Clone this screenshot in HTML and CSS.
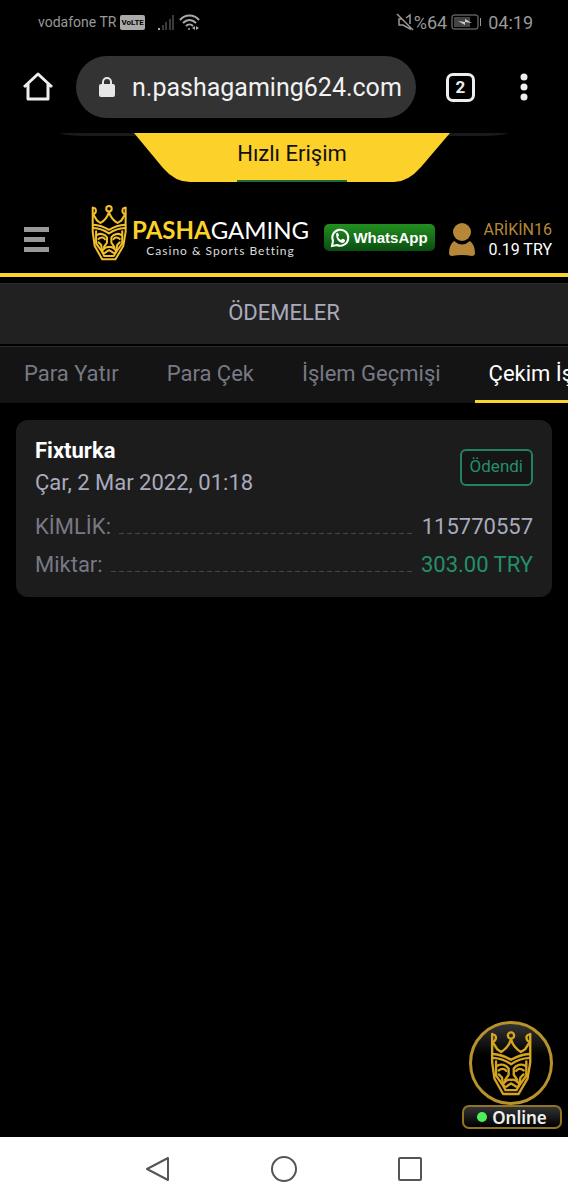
FILE: index.html
```html
<!DOCTYPE html>
<html lang="tr">
<head>
  <meta charset="UTF-8" />
  <meta name="viewport" content="width=device-width, initial-scale=1.0"/>
  <title>Ödemeler</title>
  <link rel="stylesheet" href="styles.css">
</head>
<body>

  <!-- king logo, used in the header and in the chat badge -->
  <svg class="defs" width="0" height="0" aria-hidden="true">
    <symbol id="king" viewBox="32 18 106 168">
      <g fill="none" stroke="currentColor" stroke-width="6" stroke-linejoin="round" stroke-linecap="round">
        <path d="M37 28V100L43 142L65 181H104L127 142L134 100V28"/>
        <path d="M38 30C46 28 50 38 43 46L38 48L50 67L60 74C70 68 80 58 85 42C90 58 100 68 110 74L121 67L133 48L128 46C121 38 125 28 133 30"/>
        <circle cx="85" cy="32" r="8"/>
        <path d="M38 79C55 80 72 86 85 94C98 86 116 80 133 79"/>
        <path d="M38 89C56 90 74 97 85 105C96 97 115 90 133 89"/>
        <path d="M47 98V134L64 158L71 171H99L107 158L124 134V98"/>
        <path d="M50 109C60 103 73 107 79 116V132L70 145M121 109C111 103 98 107 92 116V132L101 145"/>
        <path d="M54 121C61 115 69 116 73 122M117 121C110 115 102 116 98 122"/>
        <path d="M54 131L62 139L64 152M117 131L109 139L107 152"/>
        <path d="M85 145C78 143 72 147 67 153C62 160 70 165 76 160L85 154L95 160C101 165 109 160 104 153C99 147 92 143 85 145Z"/>
      </g>
    </symbol>
  </svg>

  <div class="status-bar">
    <span class="carrier">vodafone TR</span>
    <span class="volte">VoLTE</span>
    <svg class="signal" width="18" height="17" viewBox="0 0 18 17" fill="#3a3a3a">
      <path fill="#aaa" d="M1 14h2v2H1z"/>
      <path d="M5 11h2v5H5zM8 8h2v8H8zM12 5h2v11h-2zM15 1h2v15h-2z"/>
    </svg>
    <svg class="wifi" width="21" height="17" viewBox="0 0 21 17" fill="none" stroke="#aaa" stroke-width="2">
      <path d="M1 6C6 0 15 0 20 6M4 9C8 5 13 5 17 9M7 12C9 10 12 10 14 12"/>
      <circle cx="10" cy="15" r="1" fill="#aaa" stroke="none"/>
      <path stroke="none" fill="#aaa" d="M13 14l3-2v4zM20 14l-3-2v4z"/>
    </svg>
    <div class="status-right">
      <svg width="18" height="18" viewBox="0 0 18 18" fill="none" stroke="#999" stroke-width="1.5">
        <path d="M10 5l4-3v9M14 14v2l-7-4H3V6h3M1 1l16 16"/>
      </svg>
      <span>%64</span>
      <svg class="battery" width="31" height="16" viewBox="0 0 31 16">
        <rect x="1" y="1" width="26" height="14" rx="2" fill="none" stroke="#888"/>
        <path fill="#444" d="M3 3h16v10H3z"/>
        <path fill="#ccc" d="M7 7l7 1V5l7 4-7-1v3z"/>
        <path fill="#999" d="M29 4h1v8h-1z"/>
      </svg>
      <span>04:19</span>
    </div>
  </div>

  <div class="browser-bar">
    <button class="icon-btn" aria-label="Ana sayfa">
      <svg width="30" height="30" viewBox="0 0 30 30" fill="none" stroke="#eee" stroke-width="3" stroke-linejoin="round">
        <path d="M1 15L15 2L29 15M5 12V27H25V12"/>
      </svg>
    </button>
    <div class="address">
      <svg width="18" height="22" viewBox="0 0 18 22">
        <path d="M5 9V6a4 4 0 0 1 8 0v3" fill="none" stroke="#e6e6e6" stroke-width="2"/>
        <rect x="1" y="8" width="16" height="13" rx="2" fill="#e6e6e6"/>
      </svg>
      <input class="url" type="text" value="n.pashagaming624.com" aria-label="Adres">
    </div>
    <button class="tab-count" aria-label="Sekmeler">2</button>
    <button class="icon-btn" aria-label="Menü">
      <svg width="8" height="28" viewBox="0 0 8 28" fill="#eee">
        <circle cx="4" cy="4" r="3.5"/><circle cx="4" cy="14" r="3.5"/><circle cx="4" cy="24" r="3.5"/>
      </svg>
    </button>
  </div>

  <div class="quick-access">
    <svg class="quick-shape" viewBox="0 0 450 49" width="450" height="49">
      <path fill="#1a1a1a" d="M0 0H450Q440 3 425 3H25Q10 3 0 0"/>
      <path fill="#fcd12a" d="M75 0H391L362 34Q349 49 335 49H131Q116 49 104 35Z"/>
    </svg>
    <a href="#" class="quick-link">Hızlı Erişim</a>
  </div>

  <header class="site-header">
    <button class="menu-btn" aria-label="Menü"><i></i><i></i><i></i></button>
    <a href="#" class="logo">
      <svg class="logo-king" width="36" height="57"><use href="#king"/></svg>
      <span class="logo-text">
        <span class="logo-name"><b>PASHA</b>GAMING</span>
        <span class="logo-tag">Casino &amp; Sports Betting</span>
      </span>
    </a>
    <a href="#" class="whatsapp">
      <svg width="20" height="20" viewBox="0 0 20 20">
        <path fill="none" stroke="#fff" stroke-width="2" d="M2 18l1-5A8 8 0 1 1 7 17z"/>
        <path fill="#fff" d="M6 6q1-2 2-1l1 2q0 1-1 2 1 2 3 3l1-1q1-1 3 1 0 3-3 3-6-2-6-9z"/>
      </svg>
      <span>WhatsApp</span>
    </a>
    <a href="#" class="account">
      <svg width="26" height="33" viewBox="0 0 26 33" fill="#b48838">
        <circle cx="13" cy="9" r="9"/>
        <path d="M5 18Q13 25 21 18Q26 22 26 30Q26 33 23 33Q13 31 3 33Q0 33 0 30Q0 22 5 18"/>
      </svg>
      <span class="account-text">
        <span class="user-name">ARİKİN16</span>
        <span class="balance">0.19 TRY</span>
      </span>
    </a>
  </header>

  <h1 class="page-title">ÖDEMELER</h1>

  <nav class="tabs">
    <a href="#">Para Yatır</a>
    <a href="#">Para Çek</a>
    <a href="#">İşlem Geçmişi</a>
    <a href="#" class="active">Çekim İşlemleri</a>
  </nav>

  <main>
    <section class="card">
      <div class="card-head">
        <div>
          <h2>Fixturka</h2>
          <p>Çar, 2 Mar 2022, 01:18</p>
        </div>
        <span class="badge">Ödendi</span>
      </div>
      <dl>
        <div class="row">
          <dt>KİMLİK:</dt>
          <dd>115770557</dd>
        </div>
        <div class="row paid">
          <dt>Miktar:</dt>
          <dd>303.00 TRY</dd>
        </div>
      </dl>
    </section>

    <button class="chat">
      <span class="chat-logo"><svg width="44" height="66"><use href="#king"/></svg></span>
      <span class="chat-label"><i></i>Online</span>
    </button>
  </main>

  <footer class="nav-bar">
    <button aria-label="Geri">
      <svg width="28" height="28" viewBox="0 0 28 28"><path d="M24 3V25L3 14Z"/></svg>
    </button>
    <button aria-label="Ana ekran">
      <svg width="28" height="28" viewBox="0 0 28 28"><circle cx="14" cy="14" r="12"/></svg>
    </button>
    <button aria-label="Son uygulamalar">
      <svg width="28" height="28" viewBox="0 0 28 28"><rect x="3" y="3" width="22" height="22" rx="1"/></svg>
    </button>
  </footer>

</body>
</html>
```
FILE: styles.css
```css
* {
  box-sizing: border-box;
}
body {
  margin: 0;
  min-height: 100vh;
  display: flex;
  flex-direction: column;
  background-color: #000;
  color: #a9abbd;
  font-family: Roboto, sans-serif;
  font-size: 22px;
  overflow-x: hidden;
}
h1, h2, p, dl, dd {
  margin: 0;
}
a {
  color: inherit;
  text-decoration: none;
}
button {
  border: 0;
  padding: 0;
  background: none;
  font-family: inherit;
  color: inherit;
}
svg {
  display: block;
  flex: none;
}
.defs {
  position: absolute;
}

/* phone status bar */
.status-bar {
  display: flex;
  align-items: center;
  height: 44px;
  padding: 0 35px 0 38px;
  color: #999;
}
.carrier {
  font-size: 14px;
}
.volte {
  margin-left: 4px;
  padding: 0 1px;
  border-radius: 2px;
  background-color: #aaa;
  color: #000;
  font-size: 8px;
  font-weight: 700;
  line-height: 15px;
}
.signal {
  margin-left: 12px;
}
.wifi {
  margin-left: 4px;
}
.status-right {
  display: flex;
  align-items: center;
  margin-left: auto;
  font-size: 18px;
}
.battery {
  margin: 0 6px 0 4px;
}

/* browser bar */
.browser-bar {
  display: flex;
  align-items: center;
  height: 86px;
  padding: 0 40px 0 23px;
}
.address {
  display: flex;
  align-items: center;
  flex: 1;
  min-width: 0;
  height: 62px;
  margin: 0 30px 0 23px;
  padding: 0 8px 0 22px;
  border-radius: 31px;
  background-color: #333;
}
.url {
  flex: 1;
  min-width: 0;
  margin-left: 16px;
  padding: 0;
  border: 0;
  outline: 0;
  background: none;
  color: #f2f2f2;
  font-family: inherit;
  font-size: 25px;
}
.tab-count {
  width: 29px;
  height: 29px;
  margin-right: 45px;
  border: 3px solid #eee;
  border-radius: 7px;
  color: #eee;
  font-size: 17px;
  font-weight: 700;
  line-height: 23px;
}

/* quick access */
.quick-access {
  position: relative;
  display: flex;
  justify-content: center;
  height: 49px;
  margin-top: 3px;
  padding-left: 16px;
}
.quick-shape {
  position: absolute;
  left: 50%;
  margin-left: -225px;
}
.quick-link {
  position: relative;
  height: 49px;
  border-bottom: 2px solid #1c6a3e;
  color: #111;
  line-height: 42px;
}

/* site header */
.site-header {
  display: flex;
  align-items: center;
  height: 95px;
  padding: 10px 16px 0 24px;
  border-bottom: 4px solid #fcd52c;
}
.menu-btn {
  display: flex;
  flex-direction: column;
  gap: 5px;
  margin-top: 14px;
}
.menu-btn i {
  width: 25px;
  height: 5px;
  background-color: #999;
}
.menu-btn i:nth-child(2) {
  width: 21px;
}
.logo {
  display: flex;
  align-items: center;
  margin-left: 42px;
  font-family: Lato, sans-serif;
}
.logo-king {
  color: #f2c02c;
}
.logo-text {
  display: flex;
  flex-direction: column;
  align-items: center;
  margin: 8px 0 0 5px;
}
.logo-name {
  color: #fff;
  font-size: 24px;
  font-weight: 400;
  line-height: 28px;
}
.logo-name b {
  color: #fcd12a;
  font-weight: 700;
}
.logo-tag {
  color: #ddd;
  font-size: 12px;
  line-height: 14px;
  letter-spacing: 1px;
}
.whatsapp {
  display: flex;
  align-items: center;
  gap: 3px;
  height: 27px;
  margin: 10px 0 0 auto;
  padding: 0 7px 0 6px;
  border-radius: 5px;
  background: linear-gradient(#229020, #0a4d10);
  color: #fff;
  font-family: "Liberation Sans", Arial, sans-serif;
  font-size: 15px;
  font-weight: 700;
}
.account {
  display: flex;
  align-items: center;
  gap: 9px;
  margin: 14px 0 0 14px;
}
.account-text {
  display: flex;
  flex-direction: column;
  align-items: flex-end;
  font-size: 16px;
  line-height: 20px;
}
.user-name {
  color: #b48838;
}
.balance {
  color: #fff;
}

/* payments */
.page-title {
  height: 61px;
  margin-top: 6px;
  border-top: 1px solid #2c2c2c;
  background-color: #212121;
  font-size: 22px;
  font-weight: 400;
  line-height: 58px;
  text-align: center;
}
.tabs {
  display: flex;
  gap: 20px;
  height: 57px;
  margin-top: 2px;
  padding-left: 10px;
  overflow: hidden;
  border-top: 1px solid #2a2a2a;
  background-color: #141414;
  color: #777985;
  line-height: 54px;
}
.tabs a {
  flex: none;
  padding: 0 14px;
}
.tabs .active {
  border-bottom: 3px solid #fcd52c;
  color: #fff;
}
main {
  position: relative;
  flex: 1;
  padding: 17px 16px;
}
.card {
  padding: 15px 19px 13px;
  border-radius: 12px;
  background-color: #1c1c1c;
}
.card-head {
  display: flex;
  justify-content: space-between;
  align-items: center;
  margin-bottom: 9px;
  line-height: 32px;
}
.card h2 {
  color: #fff;
  font-size: 22px;
  font-weight: 700;
}
.badge {
  height: 37px;
  padding: 0 8px;
  border: 2px solid #23815e;
  border-radius: 6px;
  background-color: #151515;
  color: #239068;
  font-size: 17px;
  line-height: 30px;
}
.row {
  display: flex;
  line-height: 38px;
}
.row dt {
  display: flex;
  flex: 1;
  color: #777985;
}
.row dt::after {
  content: "";
  flex: 1;
  height: 1px;
  margin: 25px 8px 0;
  background: repeating-linear-gradient(90deg, #484848 0 5px, transparent 5px 8px);
}
.paid dd {
  color: #239068;
}

/* live chat */
.chat {
  position: absolute;
  right: 6px;
  bottom: 8px;
  display: flex;
  flex-direction: column;
  align-items: center;
  width: 100px;
}
.chat-logo {
  display: flex;
  align-items: center;
  justify-content: center;
  width: 84px;
  height: 84px;
  margin-right: 3px;
  border: 3px solid #b8922a;
  border-radius: 50%;
  background: linear-gradient(#333, #000 40%);
  color: #d6a520;
}
.chat-label {
  display: flex;
  align-items: center;
  justify-content: center;
  gap: 5px;
  width: 100%;
  height: 24px;
  border: 2px solid #8f7422;
  border-radius: 7px;
  background: linear-gradient(#333, #000);
  color: #eee;
  font-family: "Noto Sans", sans-serif;
  font-size: 17px;
  font-weight: 600;
}
.chat-label i {
  width: 10px;
  height: 10px;
  border-radius: 50%;
  background-color: #4cf05c;
}

/* phone navigation */
.nav-bar {
  display: flex;
  justify-content: center;
  gap: 98px;
  height: 63px;
  background-color: #fff;
}
.nav-bar svg {
  fill: none;
  stroke: #555;
  stroke-width: 2;
  stroke-linejoin: round;
}
```
